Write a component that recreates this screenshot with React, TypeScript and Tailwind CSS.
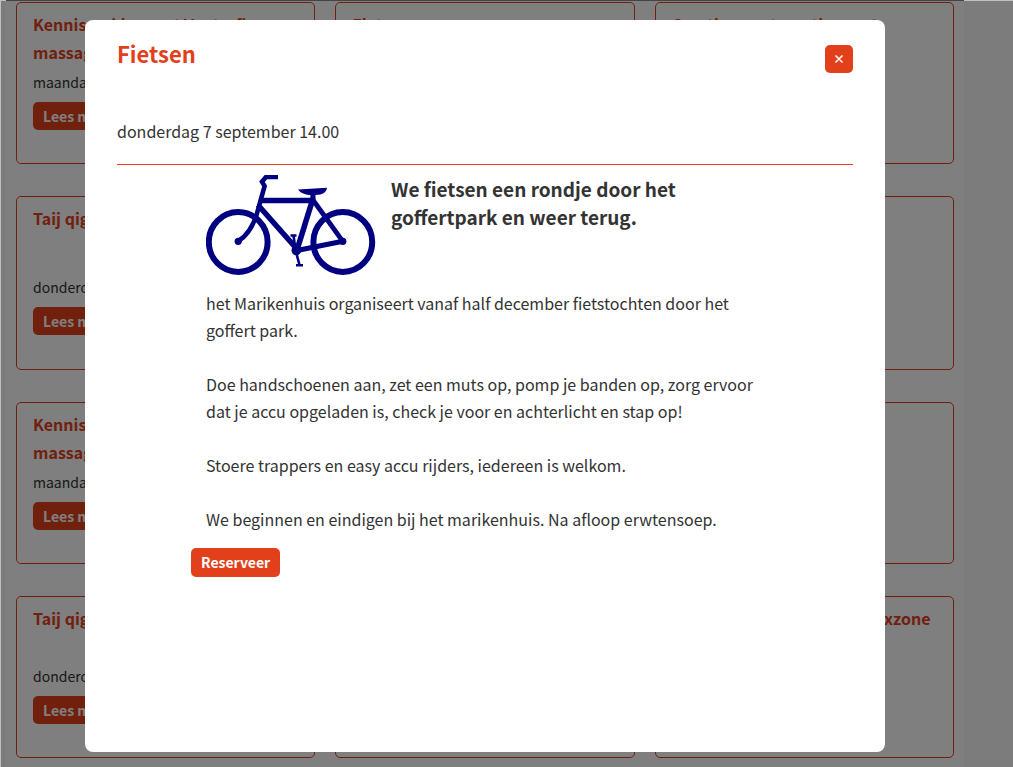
import React from 'react';

type CardInfo = { title: string; date: string };
type Row = { tall?: boolean; cards: CardInfo[] };

const maandag = 'maandag 4 september 10.00';
const donderdag = 'donderdag 7 september 14.00';

const rows: Row[] = [
  {
    cards: [
      { title: 'Kennismaking met Voetreflex massage', date: maandag },
      { title: 'Fietsen', date: donderdag },
      { title: 'Creatieve ontmoeting met', date: donderdag },
    ],
  },
  {
    tall: true,
    cards: [
      { title: 'Taij qigong', date: donderdag },
      { title: 'Wandelen', date: donderdag },
      { title: 'Relaxzone', date: donderdag },
    ],
  },
  {
    cards: [
      { title: 'Kennismaking met Voetreflex massage', date: maandag },
      { title: 'Fietsen', date: donderdag },
      { title: 'Creatieve ontmoeting met', date: donderdag },
    ],
  },
  {
    cards: [
      { title: 'Taij qigong', date: donderdag },
      { title: 'Wandelen', date: donderdag },
      { title: 'Even ontspannen in de relaxzone', date: donderdag },
    ],
  },
];

function Card({ title, date, tall }: CardInfo & { tall?: boolean }) {
  return (
    <article className={`${tall ? 'pb-[34px]' : 'pb-[33px]'} rounded-[5px] border border-[#e2401b] px-4 pt-[7px]`}>
      <h2 className={`${tall ? 'min-h-[67px]' : 'min-h-14'} text-base leading-7 font-semibold text-[#e2401b]`}>{title}</h2>
      <p className="mt-1 text-sm leading-6">{date}</p>
      <button type="button" className="mt-2 block h-7 rounded-[5px] bg-[#e2401b] px-2.5 text-sm leading-7 font-semibold text-white">
        Lees meer
      </button>
    </article>
  );
}

function Bicycle() {
  return (
    <svg viewBox="0 0 170 100" className="h-[100px] w-[170px] shrink-0" fill="none" stroke="#000080" role="img" aria-label="Fiets">
      <ellipse cx="32.2" cy="67" rx="29.4" ry="29.9" strokeWidth="6" />
      <ellipse cx="136.8" cy="67" rx="29.4" ry="29.9" strokeWidth="6" />
      <g fill="#000080" stroke="none">
        <circle cx="32.2" cy="66.3" r="3.6" />
        <circle cx="136.8" cy="66.3" r="3.6" />
        <circle cx="90.3" cy="75.5" r="4.8" />
        <path d="M92 14.4 L120.8 12.8 Q121.5 14.8 118 18 Q115 20 109.5 20 L109.5 25 H104 L104.5 20.2 Q95 19 92 14.4Z" />
      </g>
      <path d="M72 2H60L56 6.8L58.600 11L50.5 40C47 51 42 60 32.2 66.300" strokeWidth="4.600" />
      <path d="M54 25.500H108" strokeWidth="5.600" />
      <path d="M52 30L90 73" strokeWidth="5.500" />
      <path d="M106.500 25L91 75" strokeWidth="5.600" />
      <path d="M107 25L136.800 66.300" strokeWidth="4.800" />
      <path d="M91 75.500L136.800 66.300" strokeWidth="5" />
      <path d="M84.500 60.500H90.500M87.500 60.500L89.500 75L93.500 90M90 90.300H97" strokeWidth="2.600" />
    </svg>
  );
}

export default function App() {
  return (
    <div className="min-h-screen border-t border-l border-[#c0c0c0] bg-[#f8f8f8] font-['Noto_Sans_CJK_SC',sans-serif] text-[#333]">
      <main className="-mt-px mr-[49px] ml-[5px] flex min-h-screen flex-col gap-8 border-t border-[#444] bg-white px-2.5 pt-px">
        {rows.map((row, i) => (
          <section key={i} className="grid grid-cols-3 gap-5">
            {row.cards.map((card) => (
              <Card key={card.title} {...card} tall={row.tall} />
            ))}
          </section>
        ))}
      </main>

      <div className="fixed top-px right-0 bottom-0 left-px flex justify-center bg-black/50 px-5 pt-[19px] pb-[15px]">
        <div className="mr-11 w-full max-w-[800px] rounded-lg bg-white px-8 pt-[25px]" role="dialog" aria-modal="true" aria-labelledby="dialog-title">
          <header className="flex items-start justify-between">
            <h1 id="dialog-title" className="text-[22px] leading-4 font-bold text-[#e2401b]">Fietsen</h1>
            <button type="button" aria-label="Sluiten" className="size-7 rounded-[5px] bg-[#e2401b] text-xs leading-[26px] font-bold text-white">×</button>
          </header>
          <p className="mt-[45px] border-b border-[#e2401b] pb-[19px] text-base leading-[27px]">donderdag 7 september 14.00</p>
          <div className="mx-auto mt-2.5 max-w-[588px]">
            <div className="px-[15px]">
              <div className="flex gap-[15px]">
                <Bicycle />
                <h2 className="max-w-[320px] text-[19px] leading-7 font-semibold">We fietsen een rondje door het goffertpark en weer terug.</h2>
              </div>
              <div className="mt-[15px] flex flex-col gap-[27px] text-base leading-[27px]">
                <p>het Marikenhuis organiseert vanaf half december fietstochten door het goffert park.</p>
                <p>Doe handschoenen aan, zet een muts op, pomp je banden op, zorg ervoor dat je accu opgeladen is, check je voor en achterlicht en stap op!</p>
                <p>Stoere trappers en easy accu rijders, iedereen is welkom.</p>
                <p>We beginnen en eindigen bij het marikenhuis. Na afloop erwtensoep.</p>
              </div>
            </div>
            <button type="button" className="mt-[15px] block rounded-[5px] bg-[#e2401b] px-2.5 pb-px text-sm leading-7 font-semibold text-white">Reserveer</button>
          </div>
        </div>
      </div>
    </div>
  );
}
